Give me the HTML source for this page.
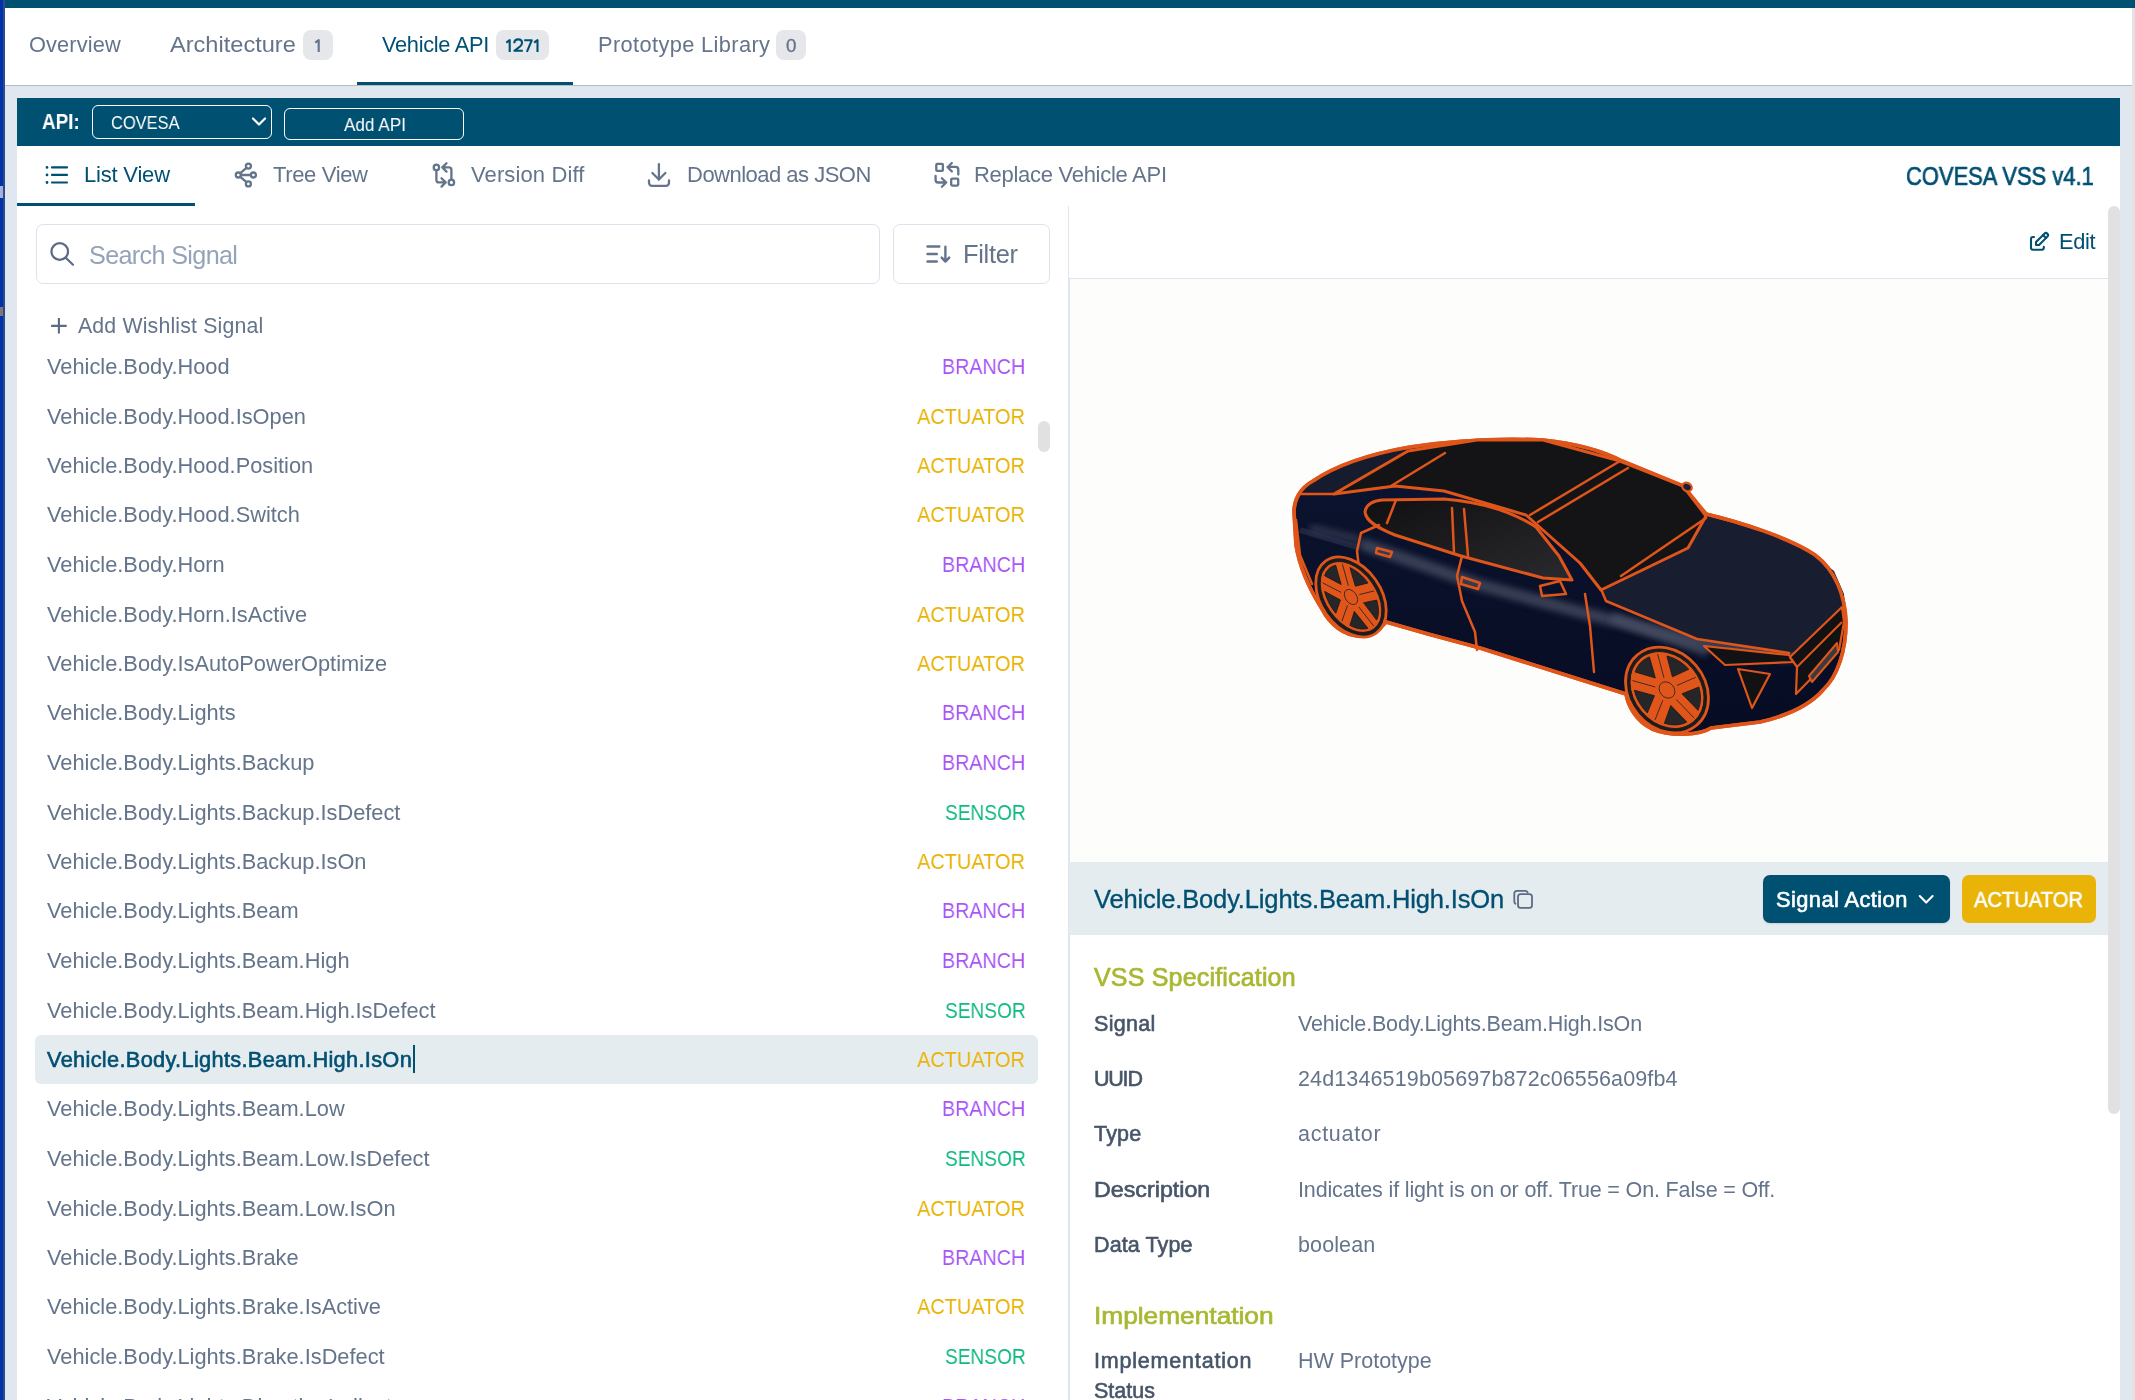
<!DOCTYPE html>
<html><head><meta charset="utf-8"><style>
html,body{margin:0;padding:0;}
body{width:2135px;height:1400px;overflow:hidden;position:relative;background:#fff;font-family:"Liberation Sans",sans-serif;}
.t{position:absolute;white-space:pre;line-height:0;will-change:transform;}
.r{position:absolute;}
.a{position:absolute;overflow:visible;}
</style></head><body>
<div class="r" style="left:0px;top:0px;width:3px;height:1400px;background:#0033a8;"></div>
<div class="r" style="left:3px;top:0px;width:2px;height:1400px;background:#2d4a8e;"></div>
<div class="r" style="left:5px;top:0px;width:2130px;height:8px;background:#005072;"></div>
<div class="r" style="left:5px;top:8px;width:2127px;height:77px;background:#ffffff;"></div>
<div class="r" style="left:5px;top:85px;width:2127px;height:1px;background:#b4bcc8;"></div>
<div class="r" style="left:5px;top:86px;width:2127px;height:1314px;background:#e1e7ef;"></div>
<div class="r" style="left:2132px;top:8px;width:3px;height:1392px;background:#e3e3e3;"></div>
<div class="t" style="left:29.30px;top:45.00px;font-size:21.80px;color:#64748b;letter-spacing:0.113px;">Overview</div>
<div class="t" style="left:170.20px;top:45.00px;font-size:21.80px;color:#64748b;transform-origin:0 0;transform:scaleX(1.0817);">Architecture</div>
<div class="r" style="left:303px;top:30px;width:30px;height:30px;background:#e5e7eb;border-radius:8px;"></div>
<svg class="a" style="left:300px;top:30px;" width="36" height="30" viewBox="300 30 36 30"><path d="M315.3 42.7L318.7 40.1V51.9" fill="none" stroke="#64748b" stroke-width="2.1" stroke-linejoin="round"/></svg>
<div class="t" style="left:381.70px;top:45.00px;font-size:21.80px;color:#005072;letter-spacing:-0.299px;">Vehicle API</div>
<div class="r" style="left:496px;top:30px;width:53px;height:30px;background:#e5e7eb;border-radius:8px;"></div>
<svg class="a" style="left:500px;top:30px;" width="45" height="30" viewBox="500 30 45 30"><g fill="none" stroke="#005072" stroke-width="2.1" stroke-linejoin="round"><path d="M506.3 42.7L509.7 40.1V51.9"/><path d="M514.3 43.3C514.3 40.9 516 39.4 518.2 39.4C520.4 39.4 522 40.9 522 42.9C522 44.4 521.3 45.4 520 46.5L514.4 50.8H522.8"/><path d="M524.2 40.3H531.7L526.9 51.9"/><path d="M534.1 42.7L537.5 40.1V51.9"/></g></svg>
<div class="t" style="left:598.00px;top:45.00px;font-size:21.80px;color:#64748b;letter-spacing:0.375px;">Prototype Library</div>
<div class="r" style="left:776px;top:30px;width:30px;height:30px;background:#e5e7eb;border-radius:8px;"></div>
<div class="t" style="left:786.27px;top:46.00px;font-size:18.80px;color:#64748b;-webkit-text-stroke:0.3px #64748b;">0</div>
<div class="r" style="left:357px;top:82px;width:216px;height:3px;background:#005072;"></div>
<div class="r" style="left:17px;top:98px;width:2103px;height:48px;background:#005072;"></div>
<div class="t" style="left:41.50px;top:122.00px;font-size:21.50px;color:#ffffff;font-weight:700;transform-origin:0 0;transform:scaleX(0.8791);">API:</div>
<div class="r" style="left:92px;top:105px;width:180px;height:34px;background:transparent;border:1.5px solid #fff;border-radius:6px;box-sizing:border-box;"></div>
<div class="t" style="left:111.00px;top:123.00px;font-size:18.90px;color:#ffffff;transform-origin:0 0;transform:scaleX(0.8696);">COVESA</div>
<svg class="a" style="left:250px;top:114px" width="18" height="16" viewBox="0 0 18 16"><path d="M3 4.5l6 6l6-6" fill="none" stroke="#fff" stroke-width="2.2" stroke-linecap="round" stroke-linejoin="round"/></svg>
<div class="r" style="left:284px;top:108px;width:180px;height:32px;background:transparent;border:1.5px solid #fff;border-radius:6px;box-sizing:border-box;"></div>
<div class="t" style="left:343.50px;top:125.00px;font-size:18.90px;color:#ffffff;transform-origin:0 0;transform:scaleX(0.9077);">Add API</div>
<div class="r" style="left:17px;top:146px;width:2103px;height:1254px;background:#ffffff;"></div>
<div class="r" style="left:17px;top:203px;width:178px;height:3px;background:#005072;"></div>
<svg class="a" style="left:40px;top:160px" width="32" height="30" viewBox="0 0 32 30"><g fill="none" stroke="#005072" stroke-width="2.2" stroke-linecap="round"><path d="M12 7.4h15M12 14.9h15M12 22.5h15"/><path d="M7 7.4h0.01M7 14.9h0.01M7 22.5h0.01" stroke-width="2.8"/></g></svg>
<div class="t" style="left:84.20px;top:175.00px;font-size:22.00px;color:#005072;letter-spacing:-0.199px;">List View</div>
<svg class="a" style="left:228px;top:155px;" width="36" height="40" viewBox="228 155 36 40"><g fill="none" stroke="#64748b" stroke-width="2.3" stroke-linecap="round" stroke-linejoin="round"><circle cx="248.4" cy="166.1" r="2.5"/><circle cx="238.3" cy="175" r="2.5"/><circle cx="253.4" cy="175" r="2.5"/><circle cx="248.4" cy="183.9" r="2.5"/><path d="M240.6 172.8L246.2 168.1M240.9 175H250.8M240.6 177.2L246.2 181.9"/></g></svg>
<div class="t" style="left:273.00px;top:175.00px;font-size:22.00px;color:#64748b;letter-spacing:-0.360px;">Tree View</div>
<svg class="a" style="left:425px;top:155px;" width="40" height="40" viewBox="425 155 40 40"><g fill="none" stroke="#64748b" stroke-width="2.3" stroke-linecap="round" stroke-linejoin="round"><circle cx="436.4" cy="167.4" r="2.7"/><circle cx="451.4" cy="182.4" r="2.7"/><path d="M436.4 170.2V179.9a2.5 2.5 0 0 0 2.5 2.5H445.5M441.5 178.2L445.7 182.4L441.5 186.6"/><path d="M451.4 179.6V169.9a2.5 2.5 0 0 0 -2.5 -2.5H442.3M446.5 163.2L442.3 167.4L446.5 171.6"/></g></svg>
<div class="t" style="left:471.00px;top:175.00px;font-size:22.00px;color:#64748b;letter-spacing:0.115px;">Version Diff</div>
<svg class="a" style="left:640px;top:155px;" width="40" height="40" viewBox="640 155 40 40"><g fill="none" stroke="#64748b" stroke-width="2.3" stroke-linecap="round" stroke-linejoin="round"><path d="M649 180.5v2.3a3 3 0 0 0 3 3h14a3 3 0 0 0 3 -3v-2.3"/><path d="M652.4 173L658.9 179.5L665.4 173"/><path d="M658.9 164.1V179.5"/></g></svg>
<div class="t" style="left:686.70px;top:175.00px;font-size:22.00px;color:#64748b;letter-spacing:-0.511px;">Download as JSON</div>
<svg class="a" style="left:925px;top:155px;" width="45" height="40" viewBox="925 155 45 40"><g fill="none" stroke="#64748b" stroke-width="2.3" stroke-linecap="round" stroke-linejoin="round"><rect x="936.3" y="163.9" width="6.6" height="7" rx="1"/><rect x="951.2" y="178.6" width="7" height="7" rx="1"/><path d="M958.3 174.6V169.5a2.7 2.7 0 0 0 -2.7 -2.7H947.6M951.8 163L947.6 167.2L951.8 171.4"/><path d="M935.6 175.9V180a2.5 2.5 0 0 0 2.5 2.5H946.2M941.9 178.3L946.2 182.5L941.9 186.7"/></g></svg>
<div class="t" style="left:974.00px;top:175.00px;font-size:22.00px;color:#64748b;letter-spacing:-0.285px;">Replace Vehicle API</div>
<div class="t" style="left:1906.00px;top:176.00px;font-size:25.00px;color:#005072;transform-origin:0 0;transform:scaleX(0.8776);-webkit-text-stroke:0.70px #005072;">COVESA VSS v4.1</div>
<div class="r" style="left:35.5px;top:224px;width:844.5px;height:59.5px;background:#fff;border:1px solid #dde3ec;border-radius:7px;box-sizing:border-box;"></div>
<svg class="a" style="left:45px;top:235px;" width="35" height="35" viewBox="45 235 35 35"><g fill="none" stroke="#5b6b85" stroke-width="2.2" stroke-linecap="round" stroke-linejoin="round"><circle cx="59.75" cy="251.5" r="8.3"/><path d="M66 258L73 264.7"/></g></svg>
<div class="t" style="left:89.00px;top:255.00px;font-size:25.20px;color:#94a3b8;letter-spacing:-0.658px;">Search Signal</div>
<div class="r" style="left:892.5px;top:224px;width:157.0px;height:59.5px;background:#fff;border:1px solid #dde3ec;border-radius:7px;box-sizing:border-box;"></div>
<svg class="a" style="left:920px;top:238px;" width="38" height="32" viewBox="920 238 38 32"><g fill="none" stroke="#64748b" stroke-width="2.4" stroke-linecap="round" stroke-linejoin="round"><path d="M927.5 246.5H939.3M927.5 254H936.8M927.5 261.5H936.8"/><path d="M945.4 246.8V261.6M941.7 257.6L945.4 261.6L949.2 257.6"/></g></svg>
<div class="t" style="left:963.00px;top:254.00px;font-size:25.40px;color:#64748b;letter-spacing:-0.288px;">Filter</div>
<svg class="a" style="left:45px;top:312px;" width="30" height="28" viewBox="45 312 30 28"><path d="M58.9 318V333.6M51.1 325.9H66.7" fill="none" stroke="#5b6b85" stroke-width="2.1"/></svg>
<div class="t" style="left:77.80px;top:326.00px;font-size:21.30px;color:#64748b;letter-spacing:0.161px;">Add Wishlist Signal</div>
<div class="r" style="left:35px;top:1035px;width:1003px;height:49px;background:#e5ecf0;border-radius:6px;"></div>
<div class="t" style="left:47.20px;top:367.00px;font-size:21.80px;color:#64748b;">Vehicle.Body.Hood</div>
<div class="t" style="left:942.00px;top:367.00px;font-size:22.40px;color:#a855f7;transform-origin:0 0;transform:scaleX(0.8795);">BRANCH</div>
<div class="t" style="left:47.20px;top:417.00px;font-size:21.80px;color:#64748b;">Vehicle.Body.Hood.IsOpen</div>
<div class="t" style="left:917.30px;top:417.00px;font-size:22.40px;color:#eab308;transform-origin:0 0;transform:scaleX(0.8907);">ACTUATOR</div>
<div class="t" style="left:47.20px;top:466.00px;font-size:21.80px;color:#64748b;">Vehicle.Body.Hood.Position</div>
<div class="t" style="left:917.30px;top:466.00px;font-size:22.40px;color:#eab308;transform-origin:0 0;transform:scaleX(0.8907);">ACTUATOR</div>
<div class="t" style="left:47.20px;top:515.00px;font-size:21.80px;color:#64748b;">Vehicle.Body.Hood.Switch</div>
<div class="t" style="left:917.30px;top:515.00px;font-size:22.40px;color:#eab308;transform-origin:0 0;transform:scaleX(0.8907);">ACTUATOR</div>
<div class="t" style="left:47.20px;top:565.00px;font-size:21.80px;color:#64748b;">Vehicle.Body.Horn</div>
<div class="t" style="left:942.00px;top:565.00px;font-size:22.40px;color:#a855f7;transform-origin:0 0;transform:scaleX(0.8795);">BRANCH</div>
<div class="t" style="left:47.20px;top:615.00px;font-size:21.80px;color:#64748b;">Vehicle.Body.Horn.IsActive</div>
<div class="t" style="left:917.30px;top:615.00px;font-size:22.40px;color:#eab308;transform-origin:0 0;transform:scaleX(0.8907);">ACTUATOR</div>
<div class="t" style="left:47.20px;top:664.00px;font-size:21.80px;color:#64748b;">Vehicle.Body.IsAutoPowerOptimize</div>
<div class="t" style="left:917.30px;top:664.00px;font-size:22.40px;color:#eab308;transform-origin:0 0;transform:scaleX(0.8907);">ACTUATOR</div>
<div class="t" style="left:47.20px;top:713.00px;font-size:21.80px;color:#64748b;">Vehicle.Body.Lights</div>
<div class="t" style="left:942.00px;top:713.00px;font-size:22.40px;color:#a855f7;transform-origin:0 0;transform:scaleX(0.8795);">BRANCH</div>
<div class="t" style="left:47.20px;top:763.00px;font-size:21.80px;color:#64748b;">Vehicle.Body.Lights.Backup</div>
<div class="t" style="left:942.00px;top:763.00px;font-size:22.40px;color:#a855f7;transform-origin:0 0;transform:scaleX(0.8795);">BRANCH</div>
<div class="t" style="left:47.20px;top:813.00px;font-size:21.80px;color:#64748b;">Vehicle.Body.Lights.Backup.IsDefect</div>
<div class="t" style="left:944.50px;top:813.00px;font-size:22.40px;color:#10b981;transform-origin:0 0;transform:scaleX(0.8531);">SENSOR</div>
<div class="t" style="left:47.20px;top:862.00px;font-size:21.80px;color:#64748b;">Vehicle.Body.Lights.Backup.IsOn</div>
<div class="t" style="left:917.30px;top:862.00px;font-size:22.40px;color:#eab308;transform-origin:0 0;transform:scaleX(0.8907);">ACTUATOR</div>
<div class="t" style="left:47.20px;top:911.00px;font-size:21.80px;color:#64748b;">Vehicle.Body.Lights.Beam</div>
<div class="t" style="left:942.00px;top:911.00px;font-size:22.40px;color:#a855f7;transform-origin:0 0;transform:scaleX(0.8795);">BRANCH</div>
<div class="t" style="left:47.20px;top:961.00px;font-size:21.80px;color:#64748b;">Vehicle.Body.Lights.Beam.High</div>
<div class="t" style="left:942.00px;top:961.00px;font-size:22.40px;color:#a855f7;transform-origin:0 0;transform:scaleX(0.8795);">BRANCH</div>
<div class="t" style="left:47.20px;top:1011.00px;font-size:21.80px;color:#64748b;">Vehicle.Body.Lights.Beam.High.IsDefect</div>
<div class="t" style="left:944.50px;top:1011.00px;font-size:22.40px;color:#10b981;transform-origin:0 0;transform:scaleX(0.8531);">SENSOR</div>
<div class="t" style="left:47.20px;top:1060.00px;font-size:21.80px;color:#005072;letter-spacing:0.308px;-webkit-text-stroke:0.61px #005072;">Vehicle.Body.Lights.Beam.High.IsOn</div>
<div class="t" style="left:917.30px;top:1060.00px;font-size:22.40px;color:#eab308;transform-origin:0 0;transform:scaleX(0.8907);">ACTUATOR</div>
<div class="t" style="left:47.20px;top:1109.00px;font-size:21.80px;color:#64748b;">Vehicle.Body.Lights.Beam.Low</div>
<div class="t" style="left:942.00px;top:1109.00px;font-size:22.40px;color:#a855f7;transform-origin:0 0;transform:scaleX(0.8795);">BRANCH</div>
<div class="t" style="left:47.20px;top:1159.00px;font-size:21.80px;color:#64748b;">Vehicle.Body.Lights.Beam.Low.IsDefect</div>
<div class="t" style="left:944.50px;top:1159.00px;font-size:22.40px;color:#10b981;transform-origin:0 0;transform:scaleX(0.8531);">SENSOR</div>
<div class="t" style="left:47.20px;top:1209.00px;font-size:21.80px;color:#64748b;">Vehicle.Body.Lights.Beam.Low.IsOn</div>
<div class="t" style="left:917.30px;top:1209.00px;font-size:22.40px;color:#eab308;transform-origin:0 0;transform:scaleX(0.8907);">ACTUATOR</div>
<div class="t" style="left:47.20px;top:1258.00px;font-size:21.80px;color:#64748b;">Vehicle.Body.Lights.Brake</div>
<div class="t" style="left:942.00px;top:1258.00px;font-size:22.40px;color:#a855f7;transform-origin:0 0;transform:scaleX(0.8795);">BRANCH</div>
<div class="t" style="left:47.20px;top:1307.00px;font-size:21.80px;color:#64748b;">Vehicle.Body.Lights.Brake.IsActive</div>
<div class="t" style="left:917.30px;top:1307.00px;font-size:22.40px;color:#eab308;transform-origin:0 0;transform:scaleX(0.8907);">ACTUATOR</div>
<div class="t" style="left:47.20px;top:1357.00px;font-size:21.80px;color:#64748b;">Vehicle.Body.Lights.Brake.IsDefect</div>
<div class="t" style="left:944.50px;top:1357.00px;font-size:22.40px;color:#10b981;transform-origin:0 0;transform:scaleX(0.8531);">SENSOR</div>
<div class="t" style="left:47.20px;top:1407.00px;font-size:21.80px;color:#64748b;">Vehicle.Body.Lights.DirectionIndicator</div>
<div class="t" style="left:942.00px;top:1407.00px;font-size:22.40px;color:#a855f7;transform-origin:0 0;transform:scaleX(0.8795);">BRANCH</div>
<div class="r" style="left:413px;top:1045px;width:2px;height:28px;background:#005072;"></div>
<div class="r" style="left:1038px;top:421px;width:12px;height:31px;background:#e1e1e1;border-radius:6px;"></div>
<div class="r" style="left:1070px;top:279px;width:1038px;height:583px;background:#fdfdfb;"></div>
<div class="r" style="left:1068px;top:206px;width:1px;height:1194px;background:#dfe5ee;"></div>
<div class="r" style="left:1069px;top:278px;width:1px;height:1122px;background:#dfe5ee;"></div>
<div class="r" style="left:1069px;top:278px;width:1039px;height:1px;background:#dfe5ee;"></div>
<div class="r" style="left:2108px;top:206px;width:12px;height:908px;background:#e1e1e1;border-radius:6px;"></div>
<svg class="a" style="left:2020px;top:225px;" width="40" height="35" viewBox="2020 225 40 35"><g fill="none" stroke="#005072" stroke-width="2.1" stroke-linecap="round" stroke-linejoin="round"><path d="M2034 237h-1a2 2 0 0 0 -2 2v8.8a2 2 0 0 0 2 2h8.8a2 2 0 0 0 2 -2v-1"/><path d="M2047.4 236.6a2.1 2.1 0 0 0 -2.97 -2.97l-8.4 8.4v3h3l8.4 -8.4z"/><path d="M2043 235l3 3"/></g></svg>
<div class="t" style="left:2058.50px;top:242.00px;font-size:21.80px;color:#005072;letter-spacing:-0.354px;">Edit</div>
<div class="r" style="left:1069px;top:862px;width:1039px;height:73px;background:#e5ecf0;"></div>
<div class="t" style="left:1093.60px;top:899.00px;font-size:25.50px;color:#005072;letter-spacing:-0.140px;-webkit-text-stroke:0.35px #005072;">Vehicle.Body.Lights.Beam.High.IsOn</div>
<svg class="a" style="left:1505px;top:880px;" width="40" height="35" viewBox="1505 880 40 35"><g fill="none" stroke="#5b6b85" stroke-width="1.8" stroke-linecap="round" stroke-linejoin="round"><rect x="1518" y="894.2" width="14" height="13.7" rx="2.6"/><path d="M1515.4 903.8C1514.6 903.2 1514.3 902.4 1514.3 901.5V893.6C1514.3 892.1 1515.5 890.9 1517 890.9H1525.3C1526.4 890.9 1527.1 891.3 1527.6 892.2"/></g></svg>
<div class="r" style="left:1763px;top:875px;width:187px;height:48px;background:#005072;border-radius:7px;box-shadow:0 1px 2px rgba(0,0,0,0.12);"></div>
<div class="t" style="left:1775.90px;top:900.00px;font-size:21.80px;color:#ffffff;letter-spacing:0.438px;-webkit-text-stroke:0.61px #ffffff;">Signal Action</div>
<svg class="a" style="left:1910px;top:885px;" width="30" height="30" viewBox="1910 885 30 30"><g fill="none" stroke="#fff" stroke-width="2.1" stroke-linecap="round" stroke-linejoin="round"><path d="M1919.8 896L1926.2 902.6L1932.6 896"/></g></svg>
<div class="r" style="left:1962px;top:875px;width:134px;height:48px;background:#eab308;border-radius:7px;"></div>
<div class="t" style="left:1974.30px;top:900.00px;font-size:21.80px;color:#ffffff;transform-origin:0 0;transform:scaleX(0.9237);-webkit-text-stroke:0.61px #ffffff;">ACTUATOR</div>
<div class="t" style="left:1093.60px;top:977.00px;font-size:25.00px;color:#a9b833;letter-spacing:0.180px;-webkit-text-stroke:0.70px #a9b833;">VSS Specification</div>
<div class="t" style="left:1093.50px;top:1024.00px;font-size:21.50px;color:#475569;letter-spacing:0.326px;-webkit-text-stroke:0.60px #475569;">Signal</div>
<div class="t" style="left:1297.50px;top:1024.00px;font-size:21.50px;color:#64748b;letter-spacing:-0.172px;">Vehicle.Body.Lights.Beam.High.IsOn</div>
<div class="t" style="left:1093.50px;top:1079.00px;font-size:21.50px;color:#475569;letter-spacing:-1.215px;-webkit-text-stroke:0.60px #475569;">UUID</div>
<div class="t" style="left:1297.50px;top:1079.00px;font-size:21.50px;color:#64748b;letter-spacing:0.131px;">24d1346519b05697b872c06556a09fb4</div>
<div class="t" style="left:1093.50px;top:1134.00px;font-size:21.50px;color:#475569;letter-spacing:0.196px;-webkit-text-stroke:0.60px #475569;">Type</div>
<div class="t" style="left:1297.50px;top:1134.00px;font-size:21.50px;color:#64748b;letter-spacing:0.717px;">actuator</div>
<div class="t" style="left:1093.50px;top:1190.00px;font-size:21.50px;color:#475569;transform-origin:0 0;transform:scaleX(1.0814);-webkit-text-stroke:0.60px #475569;">Description</div>
<div class="t" style="left:1297.50px;top:1190.00px;font-size:21.50px;color:#64748b;letter-spacing:-0.151px;">Indicates if light is on or off. True = On. False = Off.</div>
<div class="t" style="left:1093.50px;top:1245.00px;font-size:21.50px;color:#475569;letter-spacing:0.111px;-webkit-text-stroke:0.60px #475569;">Data Type</div>
<div class="t" style="left:1297.50px;top:1245.00px;font-size:21.50px;color:#64748b;letter-spacing:0.114px;">boolean</div>
<div class="t" style="left:1094.30px;top:1316.00px;font-size:24.00px;color:#a9b833;transform-origin:0 0;transform:scaleX(1.0945);-webkit-text-stroke:0.67px #a9b833;">Implementation</div>
<div class="t" style="left:1093.50px;top:1361.00px;font-size:21.50px;color:#475569;letter-spacing:0.808px;-webkit-text-stroke:0.60px #475569;">Implementation</div>
<div class="t" style="left:1093.50px;top:1391.00px;font-size:21.50px;color:#475569;-webkit-text-stroke:0.60px #475569;">Status</div>
<div class="t" style="left:1297.80px;top:1361.00px;font-size:21.50px;color:#64748b;letter-spacing:-0.011px;">HW Prototype</div>
<div class="r" style="left:0px;top:186px;width:3px;height:12px;background:#e8e8f0;opacity:.7"></div>
<div class="r" style="left:0px;top:307px;width:3px;height:9px;background:#d9a060;opacity:.6"></div>
<svg class="a" style="left:1280px;top:425px" width="580" height="320" viewBox="1280 425 580 320"><defs><linearGradient id="sh" x1="0" y1="0" x2="0" y2="1"><stop offset="0" stop-color="#0d1430"/><stop offset="1" stop-color="#060c22"/></linearGradient><linearGradient id="gl" x1="0" y1="0" x2="1" y2="1"><stop offset="0" stop-color="#101012"/><stop offset="1" stop-color="#2a2a2e"/></linearGradient></defs><path d="M1294 512C1294 500 1300 488 1313 481C1335 466 1370 454 1410 447C1450 441 1500 438 1543 440C1580 444 1605 452 1622 461L1683 486L1706 514C1740 522 1790 538 1815 555C1835 570 1845 595 1846 622C1846 650 1838 676 1823 690C1810 705 1790 715 1760 722L1711 728C1700 735 1672 737 1652 729C1636 721 1628 706 1626 694L1480 648L1428 634L1386 622C1378 632 1370 636 1360 636C1345 636 1330 625 1322 609C1310 590 1300 570 1296 545Z" fill="url(#sh)" stroke="#e0561a" stroke-width="3.6" stroke-linejoin="round"/><defs><filter id="bl" x="-20%" y="-50%" width="140%" height="200%"><feGaussianBlur stdDeviation="3"/></filter></defs><path d="M1365 545L1480 585L1580 612L1700 642L1790 656" fill="none" stroke="#454b60" stroke-width="12" stroke-linecap="round" opacity="0.8" filter="url(#bl)"/><path d="M1310 528L1360 540" fill="none" stroke="#3a3f55" stroke-width="8" opacity="0.7" filter="url(#bl)"/><path d="M1612 617L1708 652" fill="none" stroke="#4a5065" stroke-width="10" opacity="0.7" filter="url(#bl)"/><path d="M1300 530L1360 548" fill="none" stroke="#2d3450" stroke-width="6" opacity="0.6"/><path d="M1601 590L1706 516L1765 532L1811 553L1834 571L1844 594L1846 621L1789 653L1697 639L1606 601Z" fill="#181d30"/><path d="M1298 494L1313 481L1345 463L1395 450L1410 451L1334 494Z" fill="#161b2e"/><path d="M1294 512C1294 500 1300 488 1313 481C1335 466 1370 454 1410 447C1450 441 1500 438 1543 440C1580 444 1605 452 1622 461L1683 486L1706 514C1740 522 1790 538 1815 555C1835 570 1845 595 1846 622C1846 650 1838 676 1823 690C1810 705 1790 715 1760 722L1711 728C1700 735 1672 737 1652 729C1636 721 1628 706 1626 694L1480 648L1428 634L1386 622C1378 632 1370 636 1360 636C1345 636 1330 625 1322 609C1310 590 1300 570 1296 545Z" fill="none" stroke="#e0561a" stroke-width="3.6" stroke-linejoin="round"/><path d="M1334 494L1408 451L1477 440L1543 440L1620 461L1683 486L1706 516L1688 548L1601 590L1580 563L1526 515L1444 491L1395 486Z" fill="#141417" stroke="#e0561a" stroke-width="3" stroke-linejoin="round"/><path d="M1365 512C1366 505 1372 501 1382 500L1444 499C1480 502 1510 510 1536 527L1559 556L1572 580L1543 578L1461 556L1395 535C1380 529 1366 522 1365 512Z" fill="url(#gl)" stroke="#e0561a" stroke-width="3" stroke-linejoin="round"/><g fill="none" stroke="#e0561a" stroke-width="2.5" stroke-linecap="round" stroke-linejoin="round"><path d="M1298 494L1334 494"/><path d="M1391 486L1445 453"/><path d="M1530 515L1620 461"/><path d="M1538 522L1628 468"/><path d="M1621 576L1706 518"/><path d="M1452 508L1454 553"/><path d="M1464 509L1468 556"/><path d="M1387 523L1396 500"/><path d="M1462 556L1457 576L1462 601L1475 632L1477 650"/><path d="M1379 525L1361 533L1357 551L1359 568L1366 581"/><path d="M1585 594L1590 626L1594 672"/><path d="M1601 589L1606 601L1697 639L1789 653"/><path d="M1386 622L1428 634L1480 648L1626 694"/><path d="M1540 586L1560 581L1566 594L1542 596Z"/><path d="M1377 548L1392 552L1390 557L1376 553Z"/><path d="M1462 577L1480 583L1478 589L1461 584Z"/><path d="M1296 520L1300 555L1312 584"/></g><path d="M1704 646L1789 655L1793 662L1725 665Z" fill="#121214" stroke="#e0561a" stroke-width="2.2" stroke-linejoin="round"/><path d="M1738 669L1770 674L1752 708Z" fill="#121214" stroke="#e0561a" stroke-width="2.2" stroke-linejoin="round"/><path d="M1790 657L1842 607L1844 622L1839 650L1796 694L1797 667Z" fill="#121214" stroke="#e0561a" stroke-width="2.2" stroke-linejoin="round"/><path d="M1809 676L1837 643L1838 652L1812 682Z" fill="#3a3a3e" stroke="#e0561a" stroke-width="2" stroke-linejoin="round"/><path d="M1797 667L1842 622" fill="none" stroke="#e0561a" stroke-width="2"/><ellipse cx="1687" cy="487" rx="5" ry="4" transform="rotate(30 1687 487)" fill="#1a2038" stroke="#e0561a" stroke-width="2.2"/><g transform="translate(1351 597) rotate(-35)"><ellipse cx="0" cy="0" rx="30" ry="44" fill="#1c1c1f" stroke="#e0561a" stroke-width="2.8"/><ellipse cx="0" cy="0" rx="25.5" ry="39.5" fill="#e0561a"/><path d="M19.3 17.3L17.6 21.5L15.6 25.4L13.3 28.7L10.7 31.5L7.8 33.6L7.0 12.0Z" fill="#262629" stroke="#1a1a1c" stroke-width="0.8"/><path d="M8.2 2.8L22.4 8.3" stroke="#3a2a25" stroke-width="0.9"/><path d="M-4.1 35.4L-7.1 34.1L-9.9 32.1L-12.6 29.5L-15.0 26.3L-17.1 22.6L-5.5 13.7Z" fill="#262629" stroke="#1a1a1c" stroke-width="0.8"/><path d="M0.7 12.5L2.0 36.9" stroke="#3a2a25" stroke-width="0.9"/><path d="M-21.8 4.6L-22.0 -0.5L-21.7 -5.5L-21.0 -10.5L-19.9 -15.2L-18.4 -19.7L-10.4 -3.6Z" fill="#262629" stroke="#1a1a1c" stroke-width="0.8"/><path d="M-7.7 4.9L-21.2 14.5" stroke="#3a2a25" stroke-width="0.9"/><path d="M-9.4 -32.5L-6.5 -34.4L-3.5 -35.5L-0.4 -36.0L2.7 -35.7L5.7 -34.8L-0.9 -15.9Z" fill="#262629" stroke="#1a1a1c" stroke-width="0.8"/><path d="M-5.5 -9.5L-15.1 -27.9" stroke="#3a2a25" stroke-width="0.9"/><path d="M16.0 -24.7L18.0 -20.8L19.6 -16.4L20.8 -11.8L21.6 -6.8L22.0 -1.8L9.8 -6.3Z" fill="#262629" stroke="#1a1a1c" stroke-width="0.8"/><path d="M4.3 -10.8L11.8 -31.8" stroke="#3a2a25" stroke-width="0.9"/><ellipse cx="0" cy="0" rx="5.6" ry="8.4" fill="none" stroke="#3a2a25" stroke-width="0.9"/><ellipse cx="0" cy="0" rx="25.5" ry="39.5" fill="none" stroke="#1e1e20" stroke-width="1"/></g><g transform="translate(1667 690) rotate(-40)"><ellipse cx="0" cy="0" rx="38" ry="46" fill="#1c1c1f" stroke="#e0561a" stroke-width="2.8"/><ellipse cx="0" cy="0" rx="33.5" ry="41.5" fill="#e0561a"/><path d="M26.3 18.2L24.0 22.7L21.3 26.8L18.1 30.3L14.5 33.2L10.7 35.5L9.0 12.6Z" fill="#262629" stroke="#1a1a1c" stroke-width="0.8"/><path d="M10.5 2.9L30.2 8.7" stroke="#3a2a25" stroke-width="0.9"/><path d="M-5.5 37.3L-9.6 36.0L-13.5 33.9L-17.2 31.2L-20.5 27.8L-23.4 23.8L-7.0 14.3Z" fill="#262629" stroke="#1a1a1c" stroke-width="0.8"/><path d="M1.0 13.1L2.8 38.8" stroke="#3a2a25" stroke-width="0.9"/><path d="M-29.8 4.9L-30.0 -0.5L-29.6 -5.8L-28.7 -11.1L-27.2 -16.1L-25.1 -20.8L-13.3 -3.7Z" fill="#262629" stroke="#1a1a1c" stroke-width="0.8"/><path d="M-9.9 5.2L-28.5 15.3" stroke="#3a2a25" stroke-width="0.9"/><path d="M-12.8 -34.3L-8.9 -36.3L-4.8 -37.5L-0.6 -38.0L3.7 -37.7L7.8 -36.7L-1.2 -16.7Z" fill="#262629" stroke="#1a1a1c" stroke-width="0.8"/><path d="M-7.1 -9.9L-20.4 -29.4" stroke="#3a2a25" stroke-width="0.9"/><path d="M21.8 -26.1L24.5 -21.9L26.7 -17.3L28.4 -12.4L29.5 -7.2L30.0 -1.9L12.6 -6.6Z" fill="#262629" stroke="#1a1a1c" stroke-width="0.8"/><path d="M5.5 -11.3L15.9 -33.5" stroke="#3a2a25" stroke-width="0.9"/><ellipse cx="0" cy="0" rx="7.2" ry="8.8" fill="none" stroke="#3a2a25" stroke-width="0.9"/><ellipse cx="0" cy="0" rx="33.5" ry="41.5" fill="none" stroke="#1e1e20" stroke-width="1"/></g></svg>
</body></html>
